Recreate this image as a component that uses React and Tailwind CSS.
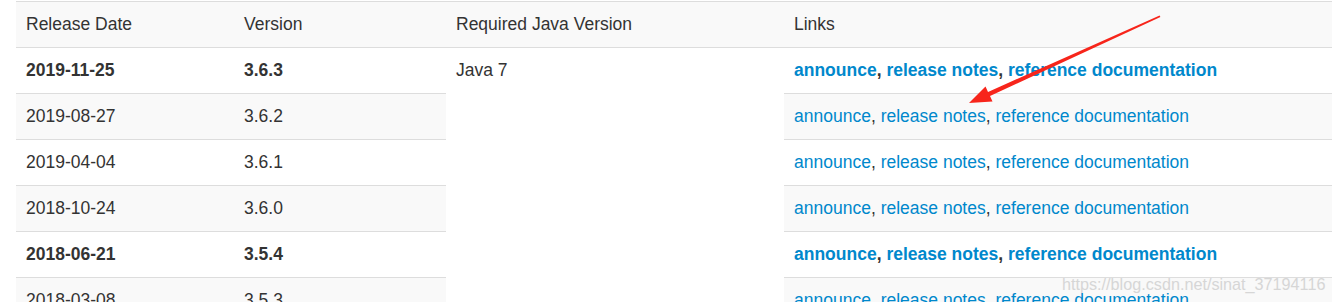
const releases = [
  { date: "2019-11-25", version: "3.6.3", bold: true },
  { date: "2019-08-27", version: "3.6.2" },
  { date: "2019-04-04", version: "3.6.1" },
  { date: "2018-10-24", version: "3.6.0" },
  { date: "2018-06-21", version: "3.5.4", bold: true },
  { date: "2018-03-08", version: "3.5.3" },
];

function Links({ bold }) {
  return (
    <span className={bold ? "font-bold" : ""}>
      <a className="text-[#0088cc]">announce</a>,{" "}
      <a className="text-[#0088cc]">release notes</a>,{" "}
      <a className="text-[#0088cc]">reference documentation</a>
    </span>
  );
}

const cell = "h-[46px] border-t border-[#dddddd] px-[10px] flex items-center";

export default function App() {
  return (
    <div
      className="relative w-[1332px] h-[302px] overflow-hidden bg-white pl-4 pt-px text-[17.5px] text-[#333333]"
      style={{ fontFamily: '"Liberation Sans", Arial, sans-serif' }}
    >
      <div className="grid grid-cols-[218px_212px_338px_1fr]">
        {/* header */}
        <div className={`${cell} bg-[#f9f9f9]`}>Release Date</div>
        <div className={`${cell} bg-[#f9f9f9]`}>Version</div>
        <div className={`${cell} bg-[#f9f9f9]`}>Required Java Version</div>
        <div className={`${cell} bg-[#f9f9f9]`}>Links</div>

        {releases.map((r, i) => {
          const bg = i % 2 === 1 ? "bg-[#f9f9f9]" : "bg-white";
          const weight = r.bold ? "font-bold" : "";
          return [
            <div key={r.date + "d"} className={`${cell} ${bg} ${weight}`}>{r.date}</div>,
            <div key={r.date + "v"} className={`${cell} ${bg} ${weight}`}>{r.version}</div>,
            i === 0 ? (
              <div key="java" className="row-span-6 border-t border-[#dddddd] bg-white px-[10px]">
                <div className="h-[45px] flex items-center">Java 7</div>
              </div>
            ) : null,
            <div key={r.date + "l"} className={`${cell} ${bg}`}>
              <Links bold={r.bold} />
            </div>,
          ];
        })}
      </div>

      {/* annotation arrow */}
      <svg
        className="absolute left-0 top-0 pointer-events-none"
        width="1332"
        height="302"
        viewBox="0 0 1332 302"
      >
        <polygon
          points="969,103 985.5,86.5 988,92 1159.6,15.4 1160.4,17 990,96 992.5,101.5"
          fill="#f7251b"
        />
      </svg>

      {/* watermark */}
      <div className="absolute left-[1062px] top-[274px] text-[16.2px] leading-[20px] text-[#d6d6d6] pointer-events-none">
        https://blog.csdn.net/sinat_37194116
      </div>
    </div>
  );
}
